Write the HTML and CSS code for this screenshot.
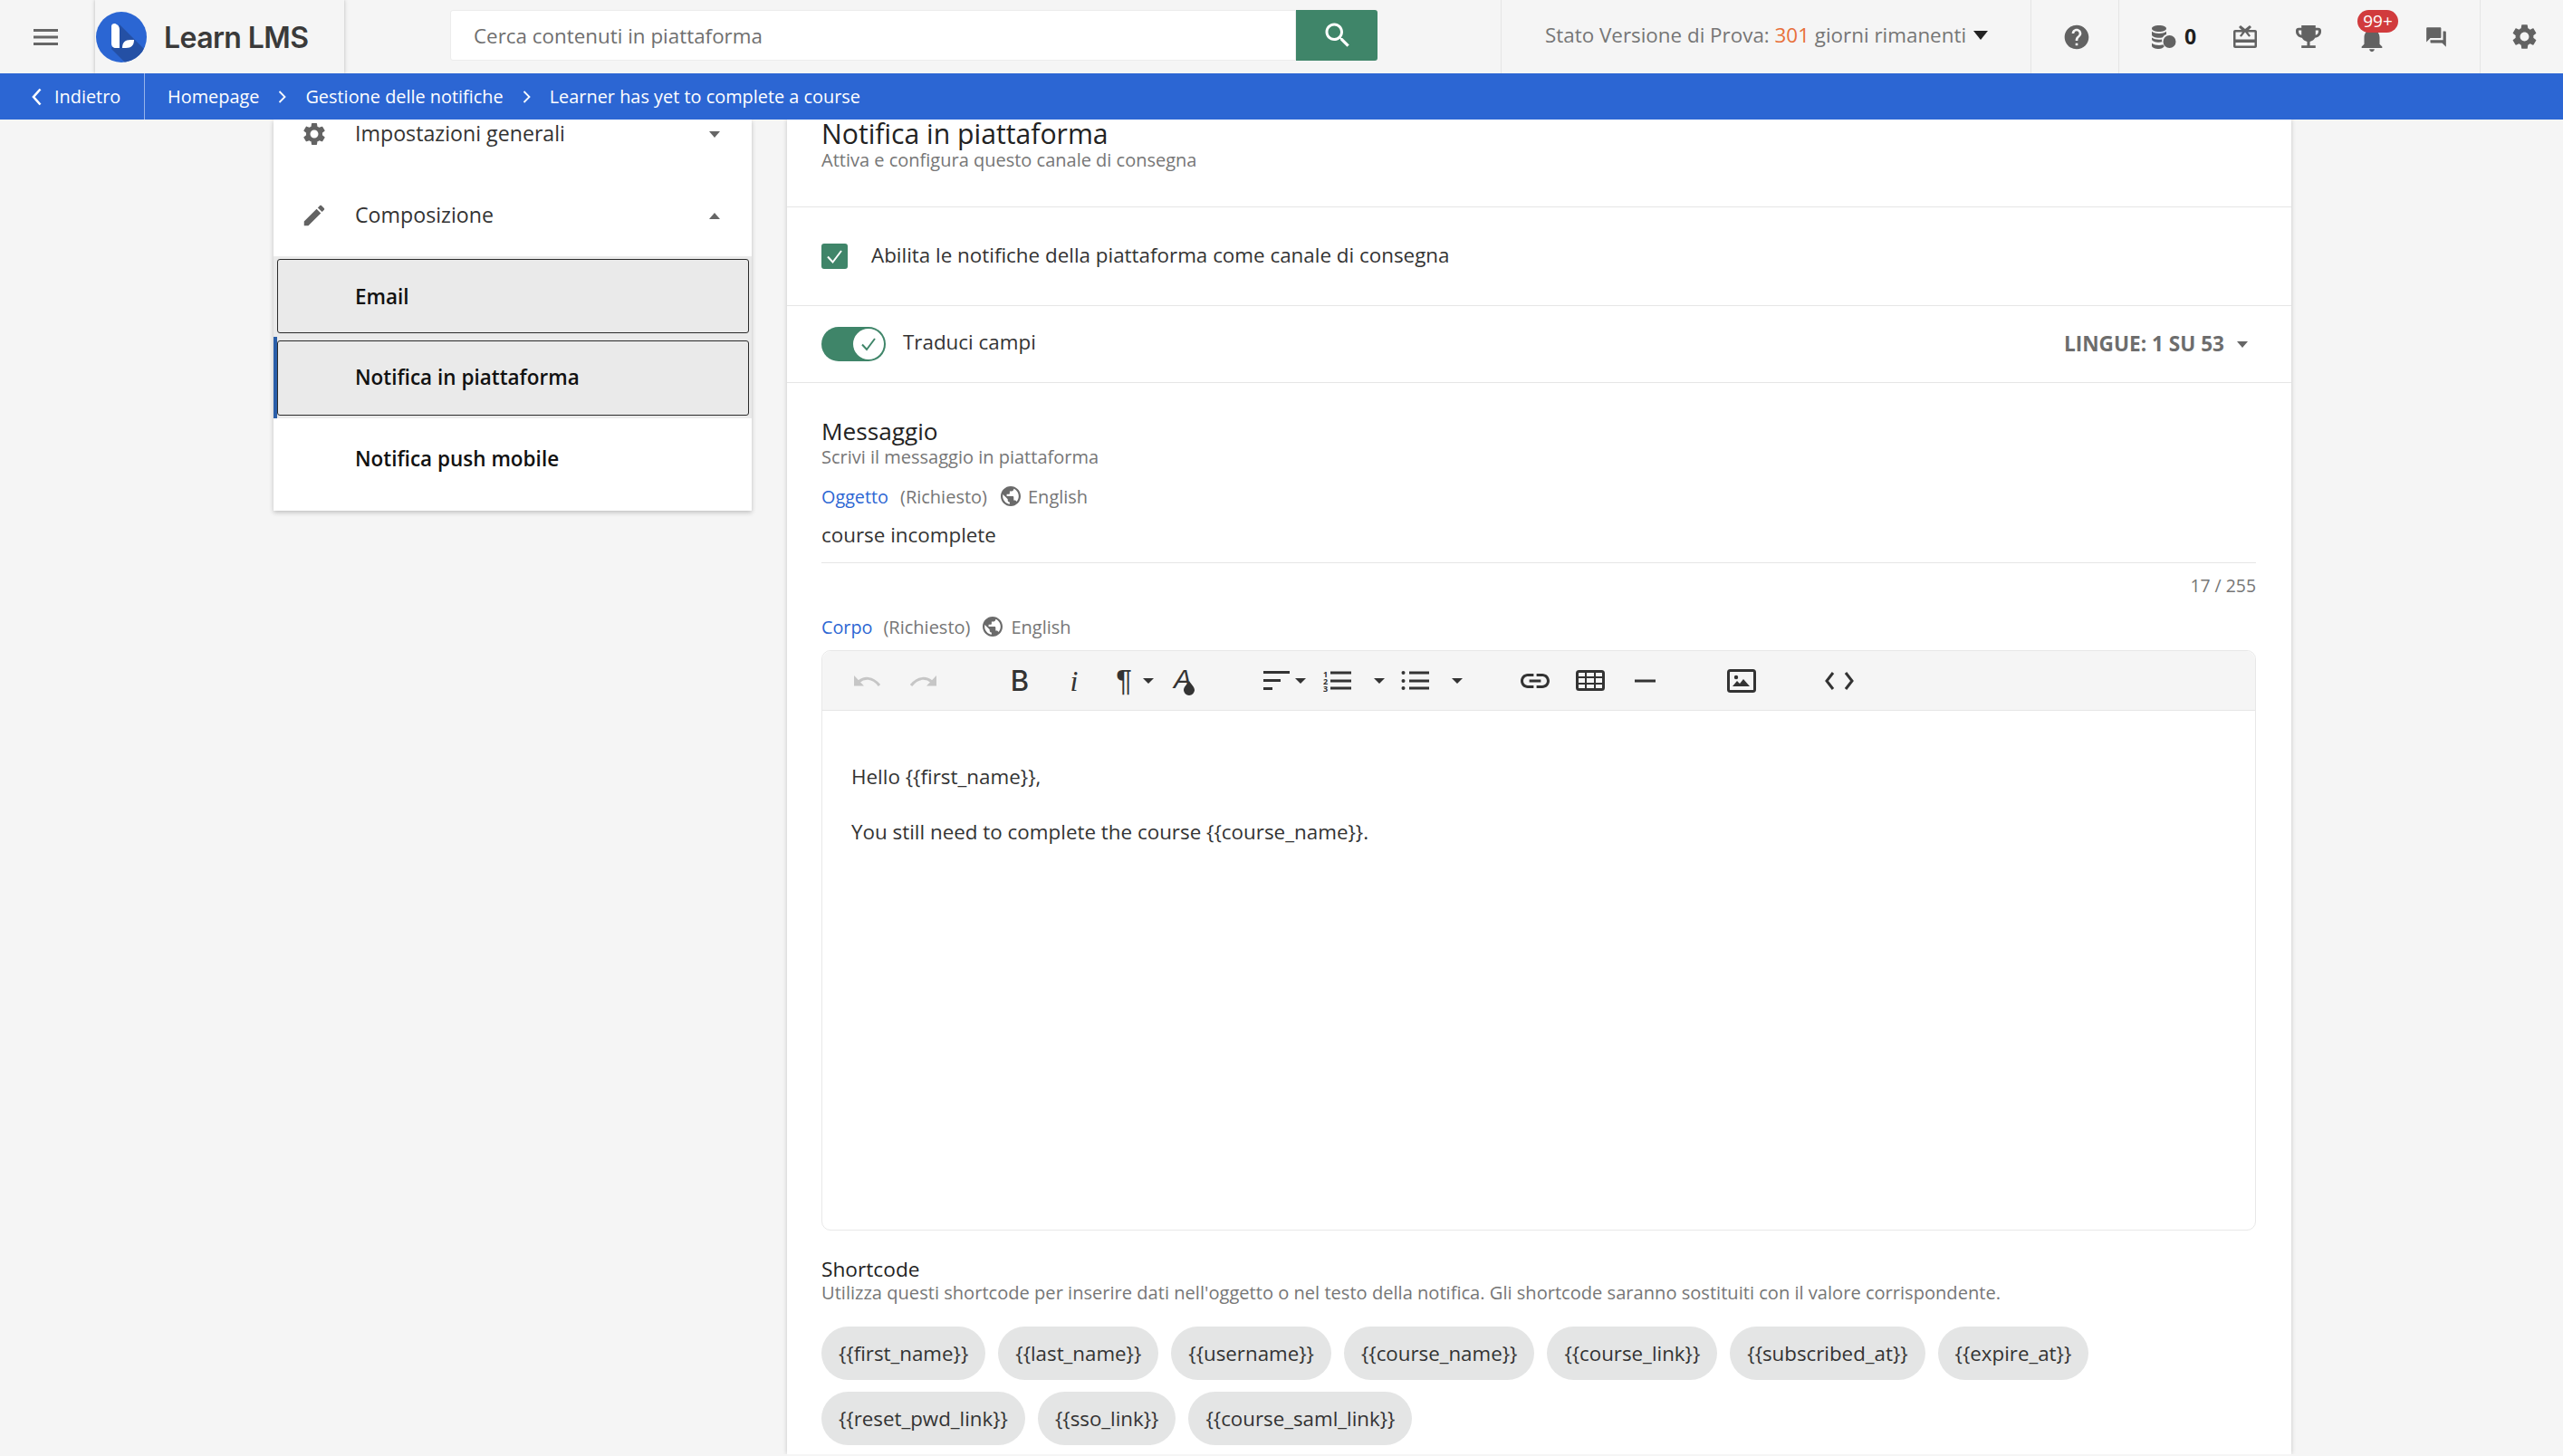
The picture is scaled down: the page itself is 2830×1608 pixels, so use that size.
FILE: index.html
```html
<!DOCTYPE html>
<html lang="it">
<head>
<meta charset="utf-8">
<title>Learn LMS</title>
<link rel="stylesheet" href="styles.css">
</head>
<body>
<div class="page">
<header class="topbar">
  <div class="menu-cell"><svg class="i-menu" viewBox="0 0 27 18"><path d="M0 0h27v3H0zM0 7.500h27v3H0zM0 15h27v3H0z"/></svg></div>
  <div class="logo-cell">
    <svg class="logo-mark" viewBox="0 0 56 56"><defs><clipPath id="lc"><circle cx="28" cy="28" r="28"/></clipPath></defs><circle cx="28" cy="28" r="28" fill="#2b66d3"/><path clip-path="url(#lc)" d="M26 14 L60 48 V60 H36 L17 41Z" fill="#2450a5"/><path d="M17 16c0-2.500 3-3.500 5-2.500 2.500 1.200 4 3 4 6V40H22c-3 0-5-2-5-5z" fill="#fff"/><path d="M29 40c0-6 3-9 9-9h4c0 6-3 9-9 9z" fill="#fff"/></svg>
    <span class="logo-text">Learn LMS</span>
  </div>
  <div class="search">
    <div class="search-box">Cerca contenuti in piattaforma</div>
    <div class="search-btn"><svg class="i-search" viewBox="0 0 24 24"><path d="M15.500 14h-.79l-.28-.27C15.410 12.590 16 11.110 16 9.500 16 5.910 13.090 3 9.500 3S3 5.910 3 9.500 5.910 16 9.500 16c1.610 0 3.090-.59 4.230-1.570l.27.28v.79l5 4.990L20.490 19l-4.990-5zm-6 0C7.010 14 5 11.990 5 9.500S7.010 5 9.500 5 14 7.010 14 9.500 11.990 14 9.500 14z"/></svg></div>
  </div>
  <div class="trial">Stato Versione di Prova:&nbsp;<span class="trial-days">301</span>&nbsp;giorni rimanenti<span class="caret-dark"></span></div>
  <div class="help-cell"><svg class="i-help" viewBox="0 0 24 24"><path d="M12 2C6.480 2 2 6.480 2 12s4.480 10 10 10 10-4.480 10-10S17.520 2 12 2zm1 17h-2v-2h2v2zm2.070-7.750l-.9.920C13.450 12.900 13 13.500 13 15h-2v-.5c0-1.100.450-2.100 1.170-2.830l1.240-1.260c.370-.36.590-.86.590-1.410 0-1.100-.9-2-2-2s-2 .9-2 2H8c0-2.210 1.790-4 4-4s4 1.790 4 4c0 .880-.36 1.680-.93 2.250z"/></svg></div>
  <div class="tools">
    <div class="coins">
      <svg class="i-coins" viewBox="0 0 28 26"><path d="M1 3.500C1 1.500 4.500 0 9 0s8 1.500 8 3.500S13.500 7 9 7 1 5.500 1 3.500zM1 6.800C3 8.300 6 9 9 9s6-.7 8-2.200V10c-1.800.6-3.200 1.700-4 3.200-1.200.4-2.600.6-4 .6-4.500 0-8-1.500-8-3.500zM1 13.500c2 1.500 5 2.200 8 2.200 1.100 0 2.200-.1 3.200-.3-.2.800-.2 1.800 0 2.900-1 .3-2 .4-3.200.4-4.500 0-8-1.500-8-3.500zM1 19.700c2 1.500 5 2.200 8 2.200 1.500 0 3-.2 4.300-.6.400.7 1 1.300 1.600 1.800C13.500 24.900 11.400 26 9 26c-4.500 0-8-1.500-8-3.500z"/><circle cx="20.500" cy="18" r="7"/></svg>
      <span class="coin-count">0</span>
    </div>
    <div class="tool"><svg class="i-gift" viewBox="0 0 26 25"><path d="M8 0l5 4 5-4 2 2-3 3h7c1.100 0 2 .9 2 2v16c0 1.100-.9 2-2 2H2c-1.100 0-2-.9-2-2V7c0-1.100.9-2 2-2h7L6 2zM2.500 7.500v8h21v-8H16l3 4-1.800 1.300L13 7.500l-4.200 5.300L7 11.500l3-4zM2.500 19v3.500h21V19z"/></svg></div>
    <div class="tool"><svg class="i-trophy" viewBox="3 3 18 18" preserveAspectRatio="none"><path d="M19 5h-2V3H7v2H5c-1.100 0-2 .9-2 2v1c0 2.550 1.920 4.630 4.390 4.940.630 1.500 1.980 2.630 3.610 2.960V19H7v2h10v-2h-4v-3.100c1.630-.33 2.980-1.460 3.610-2.960C19.080 12.630 21 10.550 21 8V7c0-1.100-.9-2-2-2zM5 8V7h2v3.820C5.840 10.400 5 9.300 5 8zm14 0c0 1.300-.84 2.400-2 2.820V7h2v1z"/></svg></div>
    <div class="tool bell">
      <svg class="i-bell" viewBox="0 0 24 24"><path d="M12 22c1.100 0 2-.9 2-2h-4c0 1.100.9 2 2 2zm6-6v-5c0-3.070-1.630-5.640-4.500-6.320V4c0-.83-.67-1.500-1.500-1.500s-1.500.67-1.500 1.500v.68C7.640 5.360 6 7.920 6 11v5l-2 2v1h16v-1l-2-2z"/></svg>
      <span class="badge">99+</span>
    </div>
    <div class="tool"><svg class="i-forum" viewBox="0 0 24 24"><path d="M21 6h-2v9H6v2c0 .55.45 1 1 1h11l4 4V7c0-.55-.45-1-1-1zm-4 6V3c0-.55-.45-1-1-1H3c-.55 0-1 .45-1 1v14l4-4h10c.55 0 1-.45 1-1z"/></svg></div>
  </div>
  <div class="gear-cell"><svg class="i-gear" viewBox="0 0 24 24"><path d="M19.140 12.940c.04-.3.06-.61.06-.94 0-.32-.02-.64-.07-.94l2.030-1.580c.18-.14.23-.41.12-.61l-1.920-3.320c-.12-.22-.37-.29-.59-.22l-2.390.96c-.5-.38-1.030-.7-1.620-.94l-.36-2.540c-.04-.24-.24-.41-.48-.41h-3.840c-.24 0-.43.17-.47.41l-.36 2.540c-.59.24-1.130.57-1.620.94l-2.390-.96c-.22-.08-.47 0-.59.22L2.740 8.870c-.12.21-.08.47.12.61l2.030 1.580c-.05.3-.09.630-.09.94s.02.64.07.94l-2.030 1.580c-.18.14-.23.41-.12.61l1.920 3.320c.12.22.37.29.59.22l2.390-.96c.5.38 1.030.7 1.620.94l.36 2.540c.05.24.24.41.48.41h3.840c.24 0 .44-.17.47-.41l.36-2.540c.59-.24 1.130-.56 1.620-.94l2.390.96c.22.08.47 0 .59-.22l1.920-3.320c.12-.22.07-.47-.12-.61l-2.010-1.580zM12 15.600c-1.980 0-3.600-1.620-3.600-3.600s1.620-3.600 3.600-3.600 3.600 1.620 3.600 3.600-1.620 3.600-3.600 3.600z"/></svg></div>
</header>

<nav class="crumbs">
  <div class="back"><svg class="i-back" viewBox="0 0 11 20"><path d="M9.500 1.500L2 10l7.500 8.500"/></svg><span>Indietro</span></div>
  <div class="trail">
    <span>Homepage</span>
    <svg class="i-sep" viewBox="0 0 9 14"><path d="M1.500 1l6 6-6 6"/></svg>
    <span>Gestione delle notifiche</span>
    <svg class="i-sep" viewBox="0 0 9 14"><path d="M1.500 1l6 6-6 6"/></svg>
    <span>Learner has yet to complete a course</span>
  </div>
</nav>

<div class="content">
  <aside class="side">
    <div class="side-row first">
      <svg class="i-side" viewBox="0 0 24 24"><path d="M19.140 12.940c.04-.3.06-.61.06-.94 0-.32-.02-.64-.07-.94l2.030-1.580c.18-.14.23-.41.12-.61l-1.920-3.320c-.12-.22-.37-.29-.59-.22l-2.390.96c-.5-.38-1.030-.7-1.620-.94l-.36-2.540c-.04-.24-.24-.41-.48-.41h-3.840c-.24 0-.43.17-.47.41l-.36 2.540c-.59.24-1.130.57-1.620.94l-2.390-.96c-.22-.08-.47 0-.59.22L2.740 8.870c-.12.21-.08.47.12.61l2.030 1.580c-.05.3-.09.630-.09.94s.02.64.07.94l-2.030 1.580c-.18.14-.23.41-.12.61l1.920 3.320c.12.22.37.29.59.22l2.390-.96c.5.38 1.030.7 1.620.94l.36 2.540c.05.24.24.41.48.41h3.840c.24 0 .44-.17.47-.41l.36-2.540c.59-.24 1.130-.56 1.620-.94l2.390.96c.22.08.47 0 .59-.22l1.920-3.320c.12-.22.07-.47-.12-.61l-2.010-1.580zM12 15.600c-1.980 0-3.600-1.620-3.600-3.600s1.620-3.600 3.600-3.600 3.600 1.620 3.600 3.600-1.620 3.600-3.600 3.600z"/></svg>
      <span class="side-label">Impostazioni generali</span>
      <span class="caret down"></span>
    </div>
    <div class="side-row">
      <svg class="i-side" viewBox="0 0 24 24"><path d="M3 17.250V21h3.750L17.810 9.940l-3.750-3.750L3 17.250zM20.710 7.040c.39-.39.39-1.020 0-1.410l-2.340-2.340c-.39-.39-1.020-.39-1.410 0l-1.830 1.830 3.750 3.750 1.830-1.830z"/></svg>
      <span class="side-label">Composizione</span>
      <span class="caret up"></span>
    </div>
    <div class="sub-group">
      <div class="sub-item">Email</div>
      <div class="sub-item current">Notifica in piattaforma</div>
    </div>
    <div class="sub-plain">Notifica push mobile</div>
  </aside>

  <main class="card">
    <section class="sec sec-head">
      <h1 class="title">Notifica in piattaforma</h1>
      <p class="subtitle">Attiva e configura questo canale di consegna</p>
    </section>
    <section class="sec sec-check">
      <span class="checkbox"><svg viewBox="0 0 29 28"><path d="M7 14.500l5.500 6L22 8"/></svg></span>
      <span class="body-text lift">Abilita le notifiche della piattaforma come canale di consegna</span>
    </section>
    <section class="sec sec-toggle">
      <span class="toggle"><span class="knob"><svg viewBox="0 0 32 32"><path d="M9 16.500l5 5.500 9-12"/></svg></span></span>
      <span class="body-text lift-more">Traduci campi</span>
      <span class="langs">LINGUE: 1 SU 53<span class="caret down lang-caret"></span></span>
    </section>
    <section class="sec sec-message">
      <h2 class="heading">Messaggio</h2>
      <p class="subtitle">Scrivi il messaggio in piattaforma</p>
      <div class="field-label first-label">
        <span class="fl-name">Oggetto</span><span>(Richiesto)</span>
        <svg class="i-globe" viewBox="2 2 20 20"><path d="M12 2C6.480 2 2 6.480 2 12s4.480 10 10 10 10-4.480 10-10S17.520 2 12 2zm-1 17.930c-3.950-.49-7-3.850-7-7.930 0-.62.08-1.210.21-1.790L9 15v1c0 1.100.9 2 2 2v1.930zm6.900-2.540c-.26-.81-1-1.390-1.900-1.390h-1v-3c0-.55-.45-1-1-1H8v-2h2c.55 0 1-.45 1-1V7h2c1.100 0 2-.9 2-2v-.41c2.930 1.190 5 4.060 5 7.410 0 2.080-.8 3.970-2.100 5.390z"/></svg>
        <span>English</span>
      </div>
      <div class="input-line body-text">course incomplete</div>
      <div class="counter">17 / 255</div>
      <div class="field-label second-label">
        <span class="fl-name">Corpo</span><span>(Richiesto)</span>
        <svg class="i-globe" viewBox="2 2 20 20"><path d="M12 2C6.480 2 2 6.480 2 12s4.480 10 10 10 10-4.480 10-10S17.520 2 12 2zm-1 17.930c-3.950-.49-7-3.850-7-7.930 0-.62.08-1.210.21-1.790L9 15v1c0 1.100.9 2 2 2v1.930zm6.900-2.540c-.26-.81-1-1.390-1.900-1.390h-1v-3c0-.55-.45-1-1-1H8v-2h2c.55 0 1-.45 1-1V7h2c1.100 0 2-.9 2-2v-.41c2.930 1.190 5 4.060 5 7.410 0 2.080-.8 3.970-2.100 5.390z"/></svg>
        <span>English</span>
      </div>

      <div class="editor">
        <div class="toolbar">
          <svg class="t-undo off" viewBox="0 0 30 12"><path class="fill" d="M0 0v11.500h11z"/><path class="line" d="M5 7c6-5 15-6 23 4"/></svg>
          <svg class="t-redo off" viewBox="0 0 30 12"><path class="fill" d="M30 0v11.500H19z"/><path class="line" d="M25 7C19 2 10 1 2 11"/></svg>
          <span class="t-b">B</span>
          <span class="t-i">i</span>
          <span class="t-p">¶</span>
          <span class="t-caret c-p"></span>
          <span class="t-a">A<svg class="t-drop" viewBox="0 0 12 16"><path d="M6 0c2 3.500 6 6.500 6 10a6 6 0 0 1-12 0c0-3.500 4-6.500 6-10z"/></svg></span>
          <svg class="t-align" viewBox="0 0 29 22"><path class="bar" d="M0 1.500h29M0 10.500h19M0 19.500h10"/></svg>
          <span class="t-caret c-align"></span>
          <svg class="t-ol" viewBox="0 0 31 24"><text x="0" y="8">1</text><text x="0" y="16">2</text><text x="0" y="24">3</text><path class="bar" d="M8 3h23M8 12h23M8 20h23"/></svg>
          <span class="t-caret c-ol"></span>
          <svg class="t-ul" viewBox="0 0 31 24"><circle cx="2.500" cy="3" r="2"/><circle cx="2.500" cy="12" r="2"/><circle cx="2.500" cy="20" r="2"/><path class="bar" d="M9 3h22M9 12h22M9 20h22"/></svg>
          <span class="t-caret c-ul"></span>
          <svg class="t-link" viewBox="2 7 20 10"><path d="M3.900 12c0-1.710 1.390-3.100 3.100-3.100h4V7H7c-2.760 0-5 2.240-5 5s2.240 5 5 5h4v-1.900H7c-1.710 0-3.100-1.390-3.100-3.100zM8 13h8v-2H8v2zm9-6h-4v1.900h4c1.710 0 3.100 1.390 3.100 3.100s-1.390 3.100-3.100 3.100h-4V17h4c2.760 0 5-2.240 5-5s-2.240-5-5-5z"/></svg>
          <svg class="t-table" viewBox="0 0 32 23"><rect class="bar" x="1.500" y="1.500" width="29" height="20" rx="2"/><path class="thin" d="M1 8h30M1 15h30M11 2v19M21 2v19"/></svg>
          <svg class="t-hr" viewBox="0 0 23 4"><path class="bar" d="M0 2h23"/></svg>
          <svg class="t-img" viewBox="0 0 32 26"><rect class="bar" x="1.500" y="1.500" width="29" height="23" rx="2"/><circle cx="10" cy="9" r="2.200"/><path d="M6 19l5-6 3 3 4-5 7 8z"/></svg>
          <svg class="t-code" viewBox="0 0 32 20"><path class="bar" d="M9 1L2 10l7 9M23 1l7 9-7 9"/></svg>
        </div>
        <div class="editor-body">
          <p>Hello {{first_name}},</p>
          <p>You still need to complete the course {{course_name}}.</p>
        </div>
      </div>

      <h3 class="sc-title">Shortcode</h3>
      <p class="subtitle sc-desc">Utilizza questi shortcode per inserire dati nell'oggetto o nel testo della notifica. Gli shortcode saranno sostituiti con il valore corrispondente.</p>
      <div class="chips">
        <span class="chip">{{first_name}}</span>
        <span class="chip">{{last_name}}</span>
        <span class="chip">{{username}}</span>
        <span class="chip">{{course_name}}</span>
        <span class="chip">{{course_link}}</span>
        <span class="chip">{{subscribed_at}}</span>
        <span class="chip">{{expire_at}}</span>
        <span class="chip">{{reset_pwd_link}}</span>
        <span class="chip">{{sso_link}}</span>
        <span class="chip">{{course_saml_link}}</span>
      </div>
    </section>
  </main>
</div>
</div>
</body>
</html>
```

FILE: styles.css
```css
* { box-sizing: border-box; }
html, body { margin: 0; padding: 0; height: 100%; overflow: hidden; }
body { background: #f5f5f5; font-family: "Open Sans", "Liberation Sans", sans-serif; color: #333; }
h1, h2, h3, p { margin: 0; font-weight: inherit; }
svg { display: block; flex: none; }

.page { width: 2830px; height: 1606px; display: flex; flex-direction: column; overflow: hidden; }

/* top bar */
.topbar { height: 81px; flex: none; display: flex; align-items: stretch; background: #f5f5f5; }
.menu-cell { width: 105px; display: flex; align-items: center; padding-left: 37px; }
.i-menu { width: 27px; height: 18px; fill: #666; }
.logo-cell { width: 275px; display: flex; align-items: center; gap: 19px; padding-left: 1px; box-shadow: 0 0 4px rgba(0,0,0,.25); clip-path: inset(0 -6px 0 -6px); background: #f5f5f5; }
.logo-mark { width: 56px; height: 56px; }
.logo-text { font-family: Inter, "Liberation Sans", sans-serif; font-weight: 600; font-size: 32px; letter-spacing: -.6px; color: #3a3a3a; padding-top: 1px; }
.search { margin-left: 117px; margin-top: 11px; height: 56px; display: flex; }
.search-box { width: 934px; height: 56px; background: #fff; border: 1px solid #ececec; border-radius: 3px 0 0 3px; padding-left: 25px; display: flex; align-items: center; font-size: 22.4px; color: #6f6f6f; }
.search-btn { width: 90px; height: 56px; background: #3f8569; display: flex; align-items: center; justify-content: center; border-radius: 0 3px 3px 0; padding-left: 2px; }
.i-search { width: 36px; height: 36px; fill: #fff; }
.trial { margin-left: 136px; width: 586px; padding-left: 48px; border-left: 1px solid #e5e5e5; border-right: 1px solid #e5e5e5; display: flex; align-items: center; font-size: 22.4px; color: #767676; white-space: nowrap; padding-bottom: 4px; }
.trial-days { color: #e8703a; }
.caret-dark { width: 0; height: 0; margin-left: 8px; border: 8px solid transparent; border-top: 10px solid #222; border-bottom: 0; }
.help-cell { width: 97px; display: flex; align-items: center; justify-content: center; border-right: 1px solid #e5e5e5; padding-left: 3px; }
.i-help { width: 32px; height: 32px; fill: #626262; }
.tools { width: 398px; display: flex; align-items: center; }
.coins { width: 104px; padding-left: 35px; display: flex; align-items: center; gap: 9px; }
.i-coins { width: 28px; height: 26px; fill: #626262; }
.coin-count { font-size: 23px; font-weight: 700; color: #1f1f1f; padding-bottom: 2px; }
.tool { width: 70px; height: 100%; display: flex; align-items: center; justify-content: center; position: relative; }
.i-gift { width: 26px; height: 25px; fill: #626262; }
.i-trophy { width: 28px; height: 25px; fill: #626262; }
.i-bell { width: 34px; height: 34px; fill: #626262; margin-top: 4px; }
.i-forum { width: 26px; height: 26px; fill: #626262; margin-left: 1px; }
.badge { position: absolute; left: 19px; top: 11px; width: 45px; height: 25px; border-radius: 13px; background: #d13b3d; color: #fff; font-size: 19px; line-height: 25px; text-align: center; }
.gear-cell { flex: 1; border-left: 1px solid #e5e5e5; display: flex; align-items: center; justify-content: center; padding-left: 5px; }
.i-gear { width: 33px; height: 33px; fill: #626262; }

/* breadcrumb */
.crumbs { height: 51px; flex: none; background: #2c66d3; display: flex; color: #fff; font-size: 19.9px; font-weight: 500; position: relative; }
.back { width: 160px; padding-left: 35px; display: flex; align-items: center; gap: 14px; border-right: 1px solid rgba(255,255,255,.5); }
.i-back { width: 11px; height: 20px; fill: none; stroke: #fff; stroke-width: 2.6; }
.trail { padding-left: 25px; display: flex; align-items: center; gap: 21px; }
.i-sep { width: 9px; height: 14px; fill: none; stroke: #fff; stroke-width: 1.8; }

/* content */
.content { flex: 1; min-height: 0; display: flex; align-items: flex-start; padding-left: 302px; gap: 39px; }
.side { width: 528px; background: #fff; box-shadow: 0 2px 5px rgba(0,0,0,.22); padding-bottom: 12px; }
.side-row { height: 90px; padding-left: 30px; padding-right: 35px; display: flex; align-items: center; }
.side-row.first { height: 61px; padding-bottom: 29px; }
.i-side { width: 30px; height: 30px; fill: #636363; }
.side-label { margin-left: 30px; flex: 1; font-size: 23.2px; font-weight: 500; color: #333; padding-bottom: 2px; }
.caret { width: 0; height: 0; border-left: 6.500px solid transparent; border-right: 6.500px solid transparent; }
.caret.down { border-top: 7px solid #666; }
.caret.up { border-bottom: 7px solid #666; }
.sub-group { background: #eaeaea; padding: 3px 3px 3px 4px; display: flex; flex-direction: column; gap: 8px; }
.sub-item { height: 82px; border: 1px solid #2b2b2b; border-radius: 3px; padding-left: 85px; display: flex; align-items: center; font-size: 22.5px; font-weight: 600; color: #111; position: relative; }
.sub-item.current { height: 83px; padding-bottom: 2px; }
.sub-item.current::before { content: ""; position: absolute; left: -5px; top: -5px; bottom: -4px; width: 4px; background: #2a5ea8; }
.sub-plain { height: 90px; padding-left: 90px; padding-bottom: 1px; display: flex; align-items: center; font-size: 22.5px; font-weight: 600; color: #111; }

/* card */
.card { width: 1661px; height: 100%; background: #fff; box-shadow: 0 0 5px rgba(0,0,0,.2); overflow: hidden; }
.sec { padding: 0 39px 0 38px; border-bottom: 1px solid #e6e6e6; }
.sec-head { height: 97px; }
.title { font-size: 30.2px; font-weight: 500; line-height: 32px; color: #222; }
.subtitle { font-size: 20px; font-weight: 500; line-height: 26px; color: #767676; }
.body-text { font-size: 22.4px; color: #333; }
.lift { padding-bottom: 3px; }
.lift-more { padding-bottom: 5px; }
.sec-check { height: 109px; display: flex; align-items: center; gap: 26px; }
.checkbox { width: 29px; height: 28px; background: #3f8569; border-radius: 3px; }
.checkbox svg { width: 29px; height: 28px; fill: none; stroke: #fff; stroke-width: 2; }
.sec-toggle { height: 85px; display: flex; align-items: center; gap: 19px; padding-right: 48px; }
.toggle { width: 71px; height: 38px; border-radius: 19px; background: #3f8569; display: flex; align-items: center; justify-content: flex-end; padding-right: 2px; }
.knob { width: 34px; height: 34px; border-radius: 50%; background: #fff; display: flex; align-items: center; justify-content: center; }
.knob svg { width: 32px; height: 32px; fill: none; stroke: #3f8569; stroke-width: 2; }
.langs { margin-left: auto; font-size: 22.6px; font-weight: 700; color: #6d6d6d; display: flex; align-items: center; padding-bottom: 2px; }
.lang-caret { margin-left: 14px; margin-top: 2px; }
.sec-message { padding-top: 38px; border-bottom: 0; }
.heading { font-size: 26.2px; font-weight: 500; line-height: 31px; color: #222; }
.field-label { margin-top: 20px; height: 26px; display: flex; align-items: center; gap: 13px; font-size: 20px; color: #767676; }
.first-label { margin-top: 17px; }
.second-label { margin-top: 19px; gap: 12px; }
.second-label .i-globe { margin-right: -3px; }
.fl-name { color: #2c66d3; font-weight: 500; font-size: 19.8px; }
.i-globe { width: 22px; height: 22px; fill: #6a6a6a; margin-left: 2px; margin-right: -5px; }
.input-line { margin-top: 15px; height: 46px; line-height: 30px; border-bottom: 1px solid #e6e6e6; }
.counter { margin-top: 12px; text-align: right; font-size: 19.4px; line-height: 26px; color: #767676; }

.editor { margin-top: 13px; height: 641px; border: 1px solid #e8e8e8; border-radius: 10px; }
.toolbar { height: 66px; background: #f5f5f5; border-bottom: 1px solid #e6e6e6; border-radius: 10px 10px 0 0; display: flex; align-items: center; color: #333; fill: #333; padding-left: 35px; }
.toolbar .bar { fill: none; stroke: #333; stroke-width: 3; }
.toolbar .thin { fill: none; stroke: #333; stroke-width: 2; }
.toolbar text { font-size: 9px; font-weight: 700; font-family: "Open Sans", sans-serif; fill: #333; }
.off .fill { fill: #c6c6c6; }
.off .line { fill: none; stroke: #c6c6c6; stroke-width: 3; }
.t-undo { width: 30px; height: 12px; }
.t-redo { width: 30px; height: 12px; margin-left: 31px; }
.t-b { width: 22px; margin-left: 81px; font-family: Inter, sans-serif; font-weight: 500; font-size: 31px; line-height: 40px; text-align: center; }
.t-i { width: 12px; margin-left: 43px; font-family: "Liberation Serif", serif; font-style: italic; font-size: 32px; line-height: 40px; text-align: center; }
.t-p { width: 22px; margin-left: 38px; font-family: "Liberation Sans", sans-serif; font-size: 33px; line-height: 40px; text-align: center; }
.t-caret { width: 0; height: 0; border-left: 6px solid transparent; border-right: 6px solid transparent; border-top: 6px solid #333; }
.c-p { margin-left: 10px; }
.t-a { width: 24px; margin-left: 22px; font-family: "Liberation Sans", sans-serif; font-style: italic; font-size: 30px; line-height: 40px; position: relative; margin-top: -4px; }
.t-drop { position: absolute; left: 11px; top: 22px; width: 12px; height: 16px; }
.t-align { width: 29px; height: 22px; margin-left: 75px; }
.c-align { margin-left: 6px; }
.t-ol { width: 31px; height: 24px; margin-left: 19px; }
.c-ol { margin-left: 25px; }
.t-ul { width: 31px; height: 24px; margin-left: 18px; }
.c-ul { margin-left: 25px; }
.t-link { width: 32px; height: 16px; margin-left: 64px; }
.t-table { width: 32px; height: 23px; margin-left: 29px; }
.t-hr { width: 23px; height: 4px; margin-left: 33px; }
.t-img { width: 32px; height: 26px; margin-left: 79px; }
.t-code { width: 32px; height: 20px; margin-left: 76px; }

.editor-body { padding: 56px 32px 0; font-size: 22.4px; line-height: 34px; color: #333; }
.editor-body p { margin-bottom: 27px; }

.sc-title { margin-top: 28px; font-size: 22.7px; font-weight: 500; line-height: 30px; color: #222; }
.sc-desc { line-height: 24px; margin-top: -1px; font-size: 20.1px; }
.chips { margin-top: 25px; display: flex; flex-wrap: wrap; gap: 13px 14px; }
.chip { height: 59px; padding: 0 19px; border-radius: 30px; background: #e4e5e5; display: flex; align-items: center; font-size: 22.3px; color: #333; }
```
